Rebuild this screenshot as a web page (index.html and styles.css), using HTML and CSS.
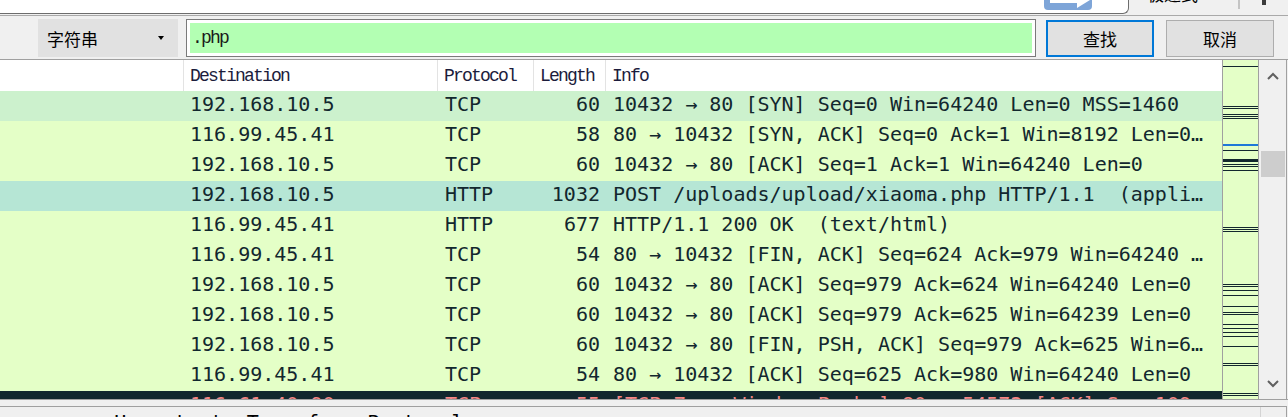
FILE: index.html
```html
<!DOCTYPE html>
<html lang="zh-CN">
<head>
<meta charset="utf-8">
<title>Wireshark</title>
<link rel="stylesheet" href="styles.css">
</head>
<body>
<div class="topbar">
  <div class="topwin">
    <svg class="topicon" width="48" height="10" viewBox="0 0 48 10">
      <rect x="0" y="-6" width="48" height="16" rx="4" fill="#7ea5d8"/>
      <rect x="6" y="0" width="28" height="3" fill="#ffffff"/>
      <polygon points="33,0 46,0 33,8" fill="#ffffff"/>
    </svg>
  </div>
  <div class="tabzone">
    <span class="tabtext">极速式</span>
    <span class="tabsep"></span>
    <span class="tabmark"></span>
  </div>
</div>

<div class="toolbar">
  <div class="dropdown"><span>字符串</span><span class="caret"></span></div>
  <div class="search"><div class="search-fill">.php</div></div>
  <div class="btn btn-primary">查找</div>
  <div class="btn btn-secondary">取消</div>
</div>

<div class="list">
  <div class="table">
    <div class="hdr">
      <div class="c0"></div>
      <div class="c1">Destination</div>
      <div class="c2">Protocol</div>
      <div class="c3">Length</div>
      <div class="c4">Info</div>
    </div>
    <div class="row r-syn"><div class="c0"></div><div class="c1">192.168.10.5</div><div class="c2">TCP</div><div class="c3">60</div><div class="c4">10432 → 80 [SYN] Seq=0 Win=64240 Len=0 MSS=1460</div></div>
    <div class="row r-norm"><div class="c0"></div><div class="c1">116.99.45.41</div><div class="c2">TCP</div><div class="c3">58</div><div class="c4">80 → 10432 [SYN, ACK] Seq=0 Ack=1 Win=8192 Len=0 MSS=1460 WS=256 SACK_PERM=1</div></div>
    <div class="row r-norm"><div class="c0"></div><div class="c1">192.168.10.5</div><div class="c2">TCP</div><div class="c3">60</div><div class="c4">10432 → 80 [ACK] Seq=1 Ack=1 Win=64240 Len=0</div></div>
    <div class="row r-sel"><div class="c0"></div><div class="c1">192.168.10.5</div><div class="c2">HTTP</div><div class="c3">1032</div><div class="c4">POST /uploads/upload/xiaoma.php HTTP/1.1  (application/x-www-form-urlencoded)</div></div>
    <div class="row r-norm"><div class="c0"></div><div class="c1">116.99.45.41</div><div class="c2">HTTP</div><div class="c3">677</div><div class="c4">HTTP/1.1 200 OK  (text/html)</div></div>
    <div class="row r-norm"><div class="c0"></div><div class="c1">116.99.45.41</div><div class="c2">TCP</div><div class="c3">54</div><div class="c4">80 → 10432 [FIN, ACK] Seq=624 Ack=979 Win=64240 Len=0</div></div>
    <div class="row r-norm"><div class="c0"></div><div class="c1">192.168.10.5</div><div class="c2">TCP</div><div class="c3">60</div><div class="c4">10432 → 80 [ACK] Seq=979 Ack=624 Win=64240 Len=0</div></div>
    <div class="row r-norm"><div class="c0"></div><div class="c1">192.168.10.5</div><div class="c2">TCP</div><div class="c3">60</div><div class="c4">10432 → 80 [ACK] Seq=979 Ack=625 Win=64239 Len=0</div></div>
    <div class="row r-norm"><div class="c0"></div><div class="c1">192.168.10.5</div><div class="c2">TCP</div><div class="c3">60</div><div class="c4">10432 → 80 [FIN, PSH, ACK] Seq=979 Ack=625 Win=64239 Len=0</div></div>
    <div class="row r-norm"><div class="c0"></div><div class="c1">116.99.45.41</div><div class="c2">TCP</div><div class="c3">54</div><div class="c4">80 → 10432 [ACK] Seq=625 Ack=980 Win=64240 Len=0</div></div>
    <div class="row r-bad"><div class="c0"></div><div class="c1">116.61.40.90</div><div class="c2">TCP</div><div class="c3">55</div><div class="c4">[TCP Zero Window Probe] 80 → 54572 [ACK] Seq=10997 Ack=1 Win=64240 Len=1</div></div>
  </div>
  <div class="minimap">
    <span class="mm" style="top:6px"></span>
    <span class="mm" style="top:46px"></span>
    <span class="mm" style="top:48px"></span>
    <span class="mm" style="top:54px"></span>
    <span class="mm" style="top:56px"></span>
    <span class="mm" style="top:58px"></span>
    <span class="mm mm-sel" style="top:84px"></span>
    <span class="mm" style="top:90px"></span>
    <span class="mm mm-thick" style="top:99px"></span>
    <span class="mm" style="top:104px"></span>
    <span class="mm" style="top:106px"></span>
    <span class="mm" style="top:110px"></span>
    <span class="mm" style="top:167px"></span>
    <span class="mm" style="top:169px"></span>
    <span class="mm" style="top:171px"></span>
    <span class="mm" style="top:224px"></span>
    <span class="mm" style="top:226px"></span>
    <span class="mm" style="top:230px"></span>
    <span class="mm" style="top:235px"></span>
    <span class="mm" style="top:246px"></span>
    <span class="mm" style="top:252px"></span>
    <span class="mm" style="top:254px"></span>
    <span class="mm" style="top:264px"></span>
    <span class="mm" style="top:268px"></span>
    <span class="mm" style="top:272px"></span>
    <span class="mm" style="top:276px"></span>
    <span class="mm" style="top:286px"></span>
    <span class="mm" style="top:303px"></span>
    <span class="mm" style="top:305px"></span>
    <span class="mm" style="top:333px"></span>
    <span class="mm" style="top:335px"></span>
  </div>
  <div class="vscroll">
    <div class="sbtn">
      <svg width="12" height="8" viewBox="0 0 12 8"><polyline points="1,7 6,2 11,7" fill="none" stroke="#606060" stroke-width="2"/></svg>
    </div>
    <div class="track"><div class="thumb"></div></div>
    <div class="sbtn sbtn-down">
      <svg width="12" height="8" viewBox="0 0 12 8"><polyline points="1,1 6,6 11,1" fill="none" stroke="#606060" stroke-width="2"/></svg>
    </div>
  </div>
</div>

<div class="detail">
  <div class="detail-body">         Hypertext  Transfer  Protocol</div>
  <div class="detail-scroll"></div>
</div>
</body>
</html>
```

FILE: styles.css
```css
* { box-sizing: border-box; }

body {
  margin: 0;
  width: 1288px;
  height: 417px;
  overflow: hidden;
  background: #f0f0f0;
  font-family: "DejaVu Sans Mono", monospace;
}

/* top strip */
.topbar {
  display: flex;
  height: 16px;
  border-bottom: 1px solid #a9a9a9;
  background: #f0f0f0;
  overflow: hidden;
}
.topwin {
  width: 1129px;
  height: 14px;
  background: #ffffff;
  border-bottom: 1px solid #6d6d6d;
  border-right: 1px solid #6d6d6d;
  border-bottom-right-radius: 6px;
  display: flex;
  justify-content: flex-end;
  padding-right: 36px;
}
.topicon { display: block; }
.tabzone {
  flex: 1;
  display: flex;
  align-items: flex-start;
}
.tabtext {
  margin-left: 18px;
  margin-top: -15px;
  font: 17px/17px "Noto Sans CJK SC", sans-serif;
  color: #000;
}
.tabsep {
  margin-left: 40px;
  width: 2px;
  height: 9px;
  background: #c4c4c4;
}
.tabmark {
  margin-left: 22px;
  width: 4px;
  height: 5px;
  background: #3c3c3c;
}

/* toolbar */
.toolbar {
  display: flex;
  align-items: flex-start;
  height: 43px;
  padding: 3px 0 0 38px;
  background: #f0f0f0;
}
.dropdown {
  width: 140px;
  height: 38px;
  background: #e1e1e1;
  display: flex;
  align-items: center;
  justify-content: space-between;
  padding: 0 14px 0 9px;
  font: 17px "Noto Sans CJK SC", sans-serif;
  color: #000;
}
.caret {
  width: 0;
  height: 0;
  border-top: 4px solid #000;
  border-left: 3px solid transparent;
  border-right: 3px solid transparent;
}
.search {
  margin-left: 8px;
  width: 850px;
  height: 38px;
  border: 1px solid #7a7a7a;
  background: #ffffff;
  padding: 3px;
}
.search-fill {
  height: 30px;
  background: #b3ffb3;
  padding-left: 2px;
  font: 18px/30px "Liberation Mono", monospace;
  letter-spacing: -1.8px;
  color: #1a1a1a;
}
.btn {
  width: 108px;
  height: 37px;
  margin-top: 1px;
  background: #e1e1e1;
  display: flex;
  align-items: center;
  justify-content: center;
  font: 17px "Noto Sans CJK SC", sans-serif;
  color: #000;
}
.btn-primary {
  margin-left: 10px;
  border: 2px solid #0078d7;
}
.btn-secondary {
  margin-left: 12px;
  border: 1px solid #adadad;
}

/* packet list */
.list {
  display: flex;
  height: 341px;
  border-top: 1px solid #a0a0a0;
  border-bottom: 1px solid #a0a0a0;
}
.table {
  width: 1222px;
  overflow: hidden;
  background: #ffffff;
}
.hdr {
  display: flex;
  height: 31px;
  background: #ffffff;
  font: 18px/32px "Liberation Mono", monospace;
  letter-spacing: -1.8px;
  color: #1c1c3c;
}
.hdr > div { padding-left: 6px; border-left: 1px solid #e3e3e3; }
.hdr > .c0 { border-left: 0; }

.c0 { width: 183px; flex: none; }
.c1 { width: 254px; flex: none; }
.c2 { width: 96px; flex: none; }
.c3 { width: 72px; flex: none; }
.c4 { width: 617px; flex: none; }

.row {
  display: flex;
  height: 30px;
  font: 20px/27px "DejaVu Sans Mono", monospace;
  color: #12272e;
  white-space: pre;
}
.row .c1 { padding-left: 7px; }
.row .c2 { padding-left: 8px; }
.row .c3 { text-align: right; padding-right: 5px; }
.row .c4 {
  padding-left: 8px;
  padding-right: 13px;
  overflow: hidden;
  text-overflow: ellipsis;
}
.r-syn { background: #ccf1cd; }
.r-norm { background: #e4ffc7; }
.r-sel { background: #b6e6d5; }
.r-bad { background: #12272e; color: #f78787; }

/* minimap */
.minimap {
  position: relative;
  width: 37px;
  border-left: 1px solid #a0a0a0;
  border-right: 1px solid #a0a0a0;
  background: #e4ffc7;
  overflow: hidden;
}
.mm {
  position: absolute;
  left: 0;
  right: 0;
  height: 1px;
  background: #12272e;
}
.mm-sel { height: 2px; background: #1e78d8; }
.mm-thick { height: 3px; }

/* scrollbar */
.vscroll {
  width: 28px;
  border-right: 1px solid #a0a0a0;
  background: #f0f0f0;
  display: flex;
  flex-direction: column;
}
.sbtn {
  height: 32px;
  display: flex;
  align-items: center;
  justify-content: center;
}
.sbtn svg { display: block; }
.sbtn-down { height: 30px; }
.track { flex: 1; padding: 59px 1px 0 2px; }
.thumb { height: 26px; background: #cdcdcd; }

/* detail pane */
.detail {
  margin-top: 6px;
  width: 1287px;
  height: 20px;
  display: flex;
  border-top: 1px solid #a0a0a0;
  border-right: 1px solid #a0a0a0;
  background: #f0f0f0;
}
.detail-body {
  flex: 1;
  padding: 3px 0 0 6px;
  font: 20px/24px "DejaVu Sans Mono", monospace;
  color: #000;
  white-space: pre;
  overflow: hidden;
}
.detail-scroll {
  width: 26px;
  border-left: 1px solid #d4d4d4;
}
```
